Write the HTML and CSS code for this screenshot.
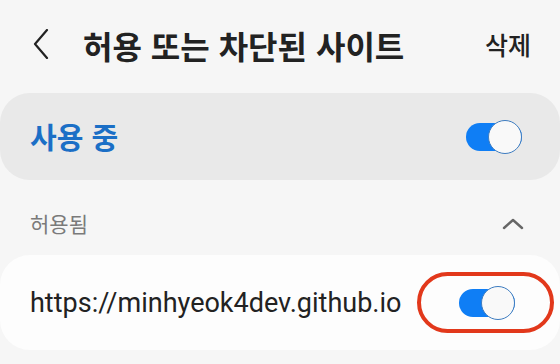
FILE: index.html
```html
<!DOCTYPE html>
<html lang="ko">
<head>
<meta charset="utf-8">
<link rel="stylesheet" href="styles.css">
</head>
<body>
<header class="topbar">
  <svg class="back" width="16" height="30" viewBox="0 0 16 30"><path d="M14 1 L2 15 L14 29" fill="none" stroke="#222" stroke-width="2.2" stroke-linecap="round" stroke-linejoin="round"/></svg>
  <h1 class="title">허용 또는 차단된 사이트</h1>
  <span class="delete">삭제</span>
</header>
<section class="card card-main">
  <span class="main-label">사용 중</span>
  <span class="toggle"><span class="knob"></span></span>
</section>
<div class="section-head">
  <span class="section-label">허용됨</span>
  <svg class="collapse" width="22" height="12" viewBox="0 0 22 12"><path d="M2 10 L11 2 L20 10" fill="none" stroke="#666" stroke-width="2.4" stroke-linecap="round" stroke-linejoin="round"/></svg>
</div>
<section class="card card-site">
  <span class="site">https://minhyeok4dev.github.io</span>
  <span class="highlight"><span class="toggle"><span class="knob"></span></span></span>
</section>
</body>
</html>
```
FILE: styles.css
```css
* { box-sizing: border-box; }
html, body { margin: 0; padding: 0; }
body {
  width: 560px;
  height: 364px;
  overflow: hidden;
  background: #f6f6f6;
  font-family: "Noto Sans CJK KR", "Noto Sans", sans-serif;
  color: #222;
}
.topbar {
  height: 89px;
  display: flex;
  align-items: center;
  padding: 0 29px 0 33px;
}
.back { display: block; margin-top: -1px; }
.title {
  margin: 0 0 0 34px;
  font-size: 32px;
  font-weight: 700;
  letter-spacing: 0;
  flex: 1;
  line-height: 1;
}
.delete {
  font-size: 25px;
  font-weight: 500;
  line-height: 1;
}
.card {
  display: flex;
  align-items: center;
  border-radius: 30px;
}
.card-main {
  margin-top: 4px;
  height: 87px;
  background: #e9e9e9;
  padding: 0 38px 0 30px;
  justify-content: space-between;
}
.main-label {
  font-size: 29px;
  font-weight: 700;
  color: #1b6fc6;
  line-height: 1;
}
.toggle {
  position: relative;
  width: 56px;
  height: 28px;
  border-radius: 14px;
  background: #0f7ef5;
  display: block;
}
.knob {
  position: absolute;
  right: 0;
  top: -3px;
  width: 34px;
  height: 34px;
  border-radius: 50%;
  background: #f9f9f9;
  border: 1.5px solid #3d7cc0;
}
.section-head {
  height: 75px;
  display: flex;
  align-items: center;
  justify-content: space-between;
  padding: 12px 36px 0 30px;
}
.section-label {
  font-size: 21px;
  color: #7a7a7a;
  line-height: 1;
}
.collapse { display: block; }
.card-site {
  height: 95px;
  background: #fdfdfd;
  padding: 0 6px 0 30px;
  justify-content: space-between;
}
.site {
  font-family: Roboto, "Liberation Sans", sans-serif;
  font-size: 27px;
  color: #222;
  line-height: 1;
  margin-top: 2px;
}
.highlight {
  width: 137px;
  height: 61px;
  border: 4px solid #e2381b;
  border-radius: 31px;
  display: flex;
  align-items: center;
  justify-content: center;
  padding-left: 2px;
}
```
